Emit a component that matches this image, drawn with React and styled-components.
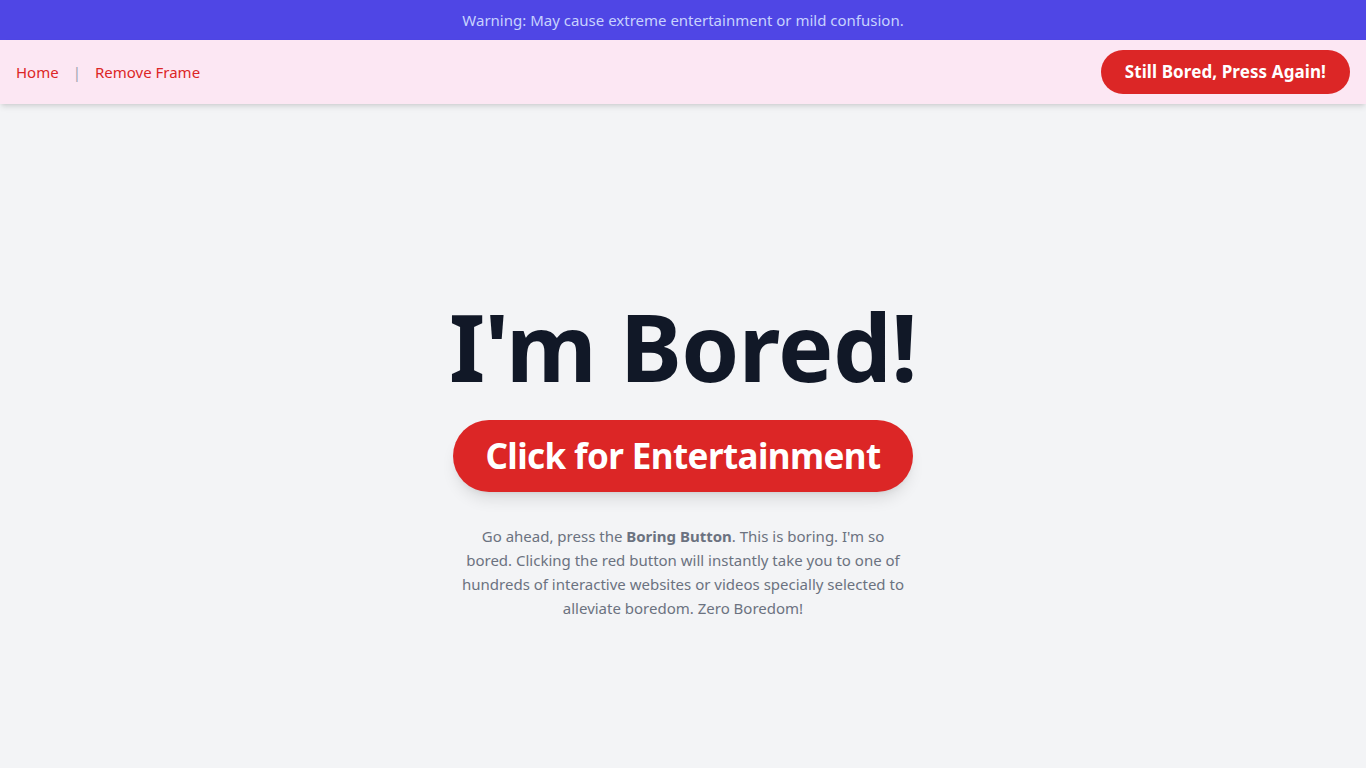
import React from "react";
import styled, { createGlobalStyle } from "styled-components";

const GlobalStyle = createGlobalStyle`
  * { box-sizing: border-box; }
  html, body { margin: 0; padding: 0; }
  body {
    background: #f3f4f6;
    font-family: "Noto Sans", "Open Sans", sans-serif;
    -webkit-font-smoothing: antialiased;
  }
`;

const Page = styled.div`
  min-height: 768px;
  display: flex;
  flex-direction: column;
  background: #f3f4f6;
`;

const Banner = styled.div`
  background: #4f46e5;
  color: #c7d2fe;
  text-align: center;
  font-size: 15px;
  line-height: 24px;
  padding: 8px 16px;
`;

const Nav = styled.nav`
  background: #fce7f3;
  height: 64px;
  padding: 0 16px;
  display: flex;
  align-items: center;
  justify-content: space-between;
  box-shadow: 0 4px 6px -1px rgba(0, 0, 0, 0.1), 0 2px 4px -2px rgba(0, 0, 0, 0.1);
  position: relative;
  z-index: 1;
`;

const NavLinks = styled.div`
  display: flex;
  align-items: center;
  font-size: 15px;
`;

const NavLink = styled.a`
  color: #dc2626;
  text-decoration: none;
  cursor: pointer;
`;

const Divider = styled.span`
  color: #9ca3af;
  margin: 0 14px;
`;

const PillButton = styled.button`
  border: none;
  cursor: pointer;
  background: #dc2626;
  color: #fff;
  font-family: inherit;
  font-weight: 700;
  border-radius: 9999px;
  font-size: ${(p) => (p.$big ? "35px" : "17px")};
  line-height: ${(p) => (p.$big ? "40px" : "28px")};
  padding: ${(p) => (p.$big ? "16px 32px" : "8px 24px")};
  letter-spacing: ${(p) => (p.$big ? "-0.6px" : "0.1px")};
  box-shadow: ${(p) =>
    p.$big
      ? "0 10px 15px -3px rgba(0,0,0,0.1), 0 4px 6px -4px rgba(0,0,0,0.1)"
      : "none"};
`;

const Main = styled.main`
  flex: 1;
  display: flex;
  flex-direction: column;
  align-items: center;
  padding: 194px 16px 0;
  text-align: center;
`;

const Title = styled.h1`
  margin: 0 0 26px;
  font-size: 93px;
  line-height: 96px;
  font-weight: 700;
  color: #111827;
  letter-spacing: -0.5px;
`;

const Blurb = styled.p`
  margin: 32px 0 0;
  max-width: 448px;
  font-size: 15px;
  line-height: 24px;
  color: #6b7280;

  strong {
    font-weight: 700;
  }
`;

export default function App() {
  return (
    <>
      <GlobalStyle />
      <Page>
        <Banner>Warning: May cause extreme entertainment or mild confusion.</Banner>
        <Nav>
          <NavLinks>
            <NavLink>Home</NavLink>
            <Divider>|</Divider>
            <NavLink>Remove Frame</NavLink>
          </NavLinks>
          <PillButton>Still Bored, Press Again!</PillButton>
        </Nav>
        <Main>
          <Title>I'm Bored!</Title>
          <PillButton $big>Click for Entertainment</PillButton>
          <Blurb>
            Go ahead, press the <strong>Boring Button</strong>. This is boring. I'm so
            bored. Clicking the red button will instantly take you to one of
            hundreds of interactive websites or videos specially selected to
            alleviate boredom. Zero Boredom!
          </Blurb>
        </Main>
      </Page>
    </>
  );
}
